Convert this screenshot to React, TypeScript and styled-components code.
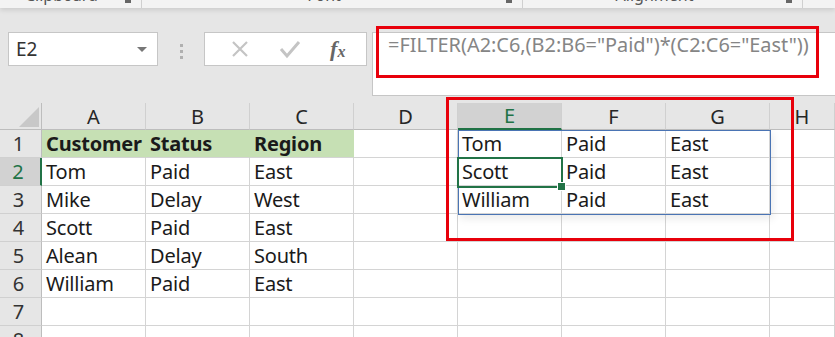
import React from 'react';
import styled, { createGlobalStyle } from 'styled-components';

const GlobalStyle = createGlobalStyle`
  body {
    margin: 0;
    background: #e6e6e6;
    font-family: "Noto Sans", "Liberation Sans", sans-serif;
    overflow: hidden;
  }
`;

const COLS = ['A', 'B', 'C', 'D', 'E', 'F', 'G', 'H'];

const source: string[][] = [
  ['Customer', 'Status', 'Region'],
  ['Tom', 'Paid', 'East'],
  ['Mike', 'Delay', 'West'],
  ['Scott', 'Paid', 'East'],
  ['Alean', 'Delay', 'South'],
  ['William', 'Paid', 'East'],
  [],
  [],
];

const spill: string[][] = [
  ['Tom', 'Paid', 'East'],
  ['Scott', 'Paid', 'East'],
  ['William', 'Paid', 'East'],
];

const cellText = (r: number, c: number) => {
  if (c < 3) return source[r]?.[c] ?? '';
  if (c >= 4 && c <= 6 && r < 3) return spill[r][c - 4];
  return '';
};

// ribbon group widths (last one is the partial group at the right edge)
const groups = [
  { label: 'Clipboard', width: 142, align: 'flex-start', pad: 25 },
  { label: 'Font', width: 381, align: 'center', pad: 0 },
  { label: 'Alignment', width: 280, align: 'center', pad: 0 },
];

export default function App() {
  return (
    <>
      <GlobalStyle />
      <Ribbon>
        {groups.map((g) => (
          <Group key={g.label} width={g.width} align={g.align} pad={g.pad}>
            <GroupLabel>{g.label}</GroupLabel>
            <Launcher />
          </Group>
        ))}
      </Ribbon>

      <FormulaRow>
        <NameBox>
          <span>E2</span>
          <Caret />
        </NameBox>
        <Grip>
          <i />
          <i />
          <i />
        </Grip>
        <FxButtons>
          <svg width="20" height="20" viewBox="0 0 20 20">
            <path d="M3 3 L17 17 M17 3 L3 17" stroke="#c4c4c4" strokeWidth="2.2" fill="none" />
          </svg>
          <svg width="22" height="20" viewBox="0 0 22 20">
            <path d="M2 10 L8 17 L20 3" stroke="#c4c4c4" strokeWidth="3" fill="none" />
          </svg>
          <FxGlyph>
            f<sub>x</sub>
          </FxGlyph>
        </FxButtons>
        <FormulaInput>
          =FILTER(A2:C6,(B2:B6="Paid")*(C2:C6="East"))
          <RedBox style={{ left: 3, top: -7, width: 443, height: 52 }} />
        </FormulaInput>
      </FormulaRow>

      <Sheet>
        <Corner>
          <svg width="22" height="22" viewBox="0 0 22 22">
            <path d="M22 2 L22 22 L2 22 Z" fill="#c8c8c8" />
          </svg>
        </Corner>
        {COLS.map((c) => (
          <ColHead key={c} active={c === 'E'}>
            {c}
          </ColHead>
        ))}
        {source.map((_, r) => (
          <React.Fragment key={r}>
            <RowHead active={r === 1}>{r + 1}</RowHead>
            {COLS.map((_, c) => (
              <Cell key={c} head={r === 0 && c < 3}>
                {cellText(r, c)}
              </Cell>
            ))}
          </React.Fragment>
        ))}
        <SpillRange />
        <Selection>
          <FillHandle />
        </Selection>
        <RedBox style={{ left: 446, top: -6, width: 348, height: 144 }} />
      </Sheet>
    </>
  );
}

const Ribbon = styled.div`
  display: flex;
  height: 8px;
  background: #f3f3f3;
  overflow: hidden;
  box-shadow: 0 2px 5px rgba(0, 0, 0, 0.12);
`;

const Group = styled.div<{ width: number; align: string; pad: number }>`
  flex: 0 0 ${(p) => p.width}px;
  height: 8px;
  display: flex;
  align-items: flex-start;
  justify-content: space-between;
  padding-left: ${(p) => p.pad}px;
  padding-right: 10px;
  border-right: 1px solid #d0d0d0;
  box-sizing: border-box;
  overflow: hidden;

  span {
    margin: ${(p) => (p.align === 'center' ? '-14px auto 0' : '-14px 0 0')};
  }
`;

const GroupLabel = styled.span`
  font-size: 16px;
  line-height: 18px;
  color: #555;
  white-space: nowrap;
`;

const Launcher = styled.i`
  width: 6px;
  height: 3px;
  background: #666;
`;

const FormulaRow = styled.div`
  display: flex;
  align-items: flex-start;
  padding: 16px 0 0 8px;
  height: 79px;
  box-sizing: border-box;
`;

const NameBox = styled.div`
  margin-top: 8px;
  width: 150px;
  height: 34px;
  box-sizing: border-box;
  border: 1px solid #c6c6c6;
  background: #fff;
  display: flex;
  align-items: center;
  justify-content: space-between;
  padding: 0 10px 0 7px;
  font-size: 19px;
  color: #333;
`;

const Caret = styled.i`
  width: 0;
  height: 0;
  border-left: 5px solid transparent;
  border-right: 5px solid transparent;
  border-top: 5px solid #777;
`;

const Grip = styled.div`
  margin-top: 20px;
  width: 46px;
  display: flex;
  flex-direction: column;
  align-items: center;
  gap: 3px;

  i {
    width: 3px;
    height: 3px;
    background: #b0b0b0;
  }
`;

const FxButtons = styled.div`
  margin-top: 8px;
  width: 163px;
  height: 34px;
  box-sizing: border-box;
  border: 1px solid #c6c6c6;
  background: #fff;
  display: flex;
  align-items: center;
  justify-content: space-around;
  padding: 0 6px 0 10px;
`;

const FxGlyph = styled.span`
  font-family: "Liberation Serif", serif;
  font-style: italic;
  font-weight: bold;
  font-size: 22px;
  color: #666;

  sub {
    font-size: 16px;
    vertical-align: -1px;
  }
`;

const FormulaInput = styled.div`
  position: relative;
  margin: 8px 0 0 5px;
  flex: 1;
  height: 64px;
  box-sizing: border-box;
  border: 1px solid #c6c6c6;
  border-right: none;
  background: #fff;
  padding: 0 0 0 15px;
  font-size: 19.9px;
  line-height: 24px;
  color: #858585;
  white-space: nowrap;
`;

const RedBox = styled.div`
  position: absolute;
  box-sizing: border-box;
  border: 3px solid #e8000b;
  pointer-events: none;
  z-index: 5;
`;

const Sheet = styled.div`
  position: relative;
  margin-top: 16px;
  display: grid;
  grid-template-columns: 42px repeat(7, 104px) 1fr;
  grid-template-rows: 27px;
  grid-auto-rows: 28px;
  background: #fff;
  font-size: 20px;
  color: #1a1a1a;
`;

const Corner = styled.div`
  background: #e6e6e6;
  border-right: 1px solid #bdbdbd;
  border-bottom: 1px solid #bdbdbd;
  display: flex;
  align-items: flex-end;
  justify-content: flex-end;
  padding: 0 2px 2px 0;
`;

const ColHead = styled.div<{ active?: boolean }>`
  background: ${(p) => (p.active ? '#d2d2d2' : '#e6e6e6')};
  border-right: 1px solid #d0d0d0;
  border-bottom: ${(p) => (p.active ? '2px solid #217346' : '1px solid #bdbdbd')};
  color: ${(p) => (p.active ? '#217346' : '#262626')};
  display: flex;
  align-items: flex-end;
  justify-content: center;
  line-height: 25px;
`;

const RowHead = styled.div<{ active?: boolean }>`
  background: ${(p) => (p.active ? '#d2d2d2' : '#e6e6e6')};
  border-right: ${(p) => (p.active ? '2px solid #217346' : '1px solid #bdbdbd')};
  border-bottom: 1px solid #d0d0d0;
  color: ${(p) => (p.active ? '#217346' : '#333')};
  display: flex;
  align-items: center;
  justify-content: center;
  padding-right: 4px;
  font-size: 20px;
`;

const Cell = styled.div<{ head?: boolean }>`
  background: ${(p) => (p.head ? '#c6e0b4' : '#fff')};
  font-weight: ${(p) => (p.head ? 700 : 400)};
  border-right: 1px solid ${(p) => (p.head ? '#c6e0b4' : '#d4d4d4')};
  border-bottom: 1px solid #d4d4d4;
  padding-left: 4px;
  display: flex;
  align-items: center;
  white-space: nowrap;
  letter-spacing: -0.2px;
`;

const SpillRange = styled.div`
  position: absolute;
  left: 458px;
  top: 27px;
  width: 313px;
  height: 85px;
  box-sizing: border-box;
  border: 1px solid #4a74b4;
  box-shadow: 2px 4px 8px rgba(0, 0, 0, 0.08);
  pointer-events: none;
`;

const Selection = styled.div`
  position: absolute;
  left: 457px;
  top: 54px;
  width: 106px;
  height: 31px;
  box-sizing: border-box;
  border: 2px solid #217346;
  pointer-events: none;
`;

const FillHandle = styled.i`
  position: absolute;
  right: -5px;
  bottom: -5px;
  width: 7px;
  height: 7px;
  background: #217346;
  border: 1px solid #fff;
`;
